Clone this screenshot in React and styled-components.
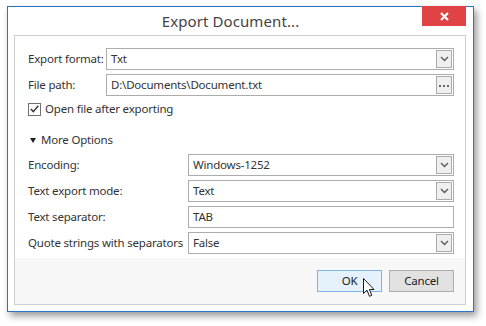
import React from 'react'
import styled, { createGlobalStyle } from 'styled-components'

const GlobalStyle = createGlobalStyle`
  html, body {
    margin: 0;
    padding: 0;
    background: #ffffff;
  }
  body {
    font-family: "Noto Sans", "Open Sans", sans-serif;
    color: #333333;
  }
`

const Page = styled.div`
  width: 486px;
  height: 326px;
  padding: 6px 0 0 7px;
  box-sizing: border-box;
`

const Window = styled.div`
  position: relative;
  width: 467px;
  height: 306px;
  box-sizing: border-box;
  border: 1px solid #2b74c5;
  background: #ffffff;
  box-shadow: 3px 4px 7px rgba(0, 0, 0, 0.4);
  display: flex;
  flex-direction: column;
`

const TitleBar = styled.div`
  height: 28px;
  flex-shrink: 0;
  display: flex;
  align-items: center;
  justify-content: center;
  padding-right: 20px;
`

const Title = styled.span`
  font-size: 15px;
  color: #444444;
  letter-spacing: 0.1px;
`

const CloseButton = styled.div`
  position: absolute;
  top: -1px;
  right: 7px;
  width: 44px;
  height: 20px;
  background: #e04343;
  display: flex;
  align-items: center;
  justify-content: center;
`

const Panel = styled.div`
  flex: 1;
  margin: 0 7px 6px 6px;
  border: 1px solid #cdcdcd;
  display: flex;
  flex-direction: column;
`

const Body = styled.div`
  padding: 12px 11px 4px 13px;
  background: #ffffff;
  display: flex;
  flex-direction: column;
`

const FormGrid = styled.div`
  display: grid;
  grid-template-columns: ${p => p.$label}px 1fr;
  row-gap: 4px;
  align-items: center;
`

const Text = `
  font-size: 11.5px;
  letter-spacing: -0.2px;
  line-height: 14px;
  color: #333333;
`

const Label = styled.span`
  ${Text}
  white-space: nowrap;
`

const Field = styled.div`
  ${Text}
  height: 22px;
  box-sizing: border-box;
  border: 1px solid #acacac;
  background: #ffffff;
  display: flex;
  align-items: center;
  padding-left: 4px;
`

const FieldText = styled.span`
  flex: 1;
`

const FieldButton = styled.div`
  width: 16px;
  height: 18px;
  margin-right: 1px;
  box-sizing: border-box;
  border: 1px solid #acacac;
  background: #efefef;
  display: flex;
  align-items: center;
  justify-content: center;
`

const CheckRow = styled.label`
  ${Text}
  height: 14px;
  display: flex;
  align-items: center;
  gap: 4px;
  margin-top: 6px;
`

const CheckBox = styled.span`
  width: 13px;
  height: 13px;
  box-sizing: border-box;
  border: 1px solid #707070;
  background: #ffffff;
  display: flex;
  align-items: center;
  justify-content: center;
`

const Expander = styled.div`
  ${Text}
  height: 14px;
  display: flex;
  align-items: center;
  gap: 5px;
  margin: 17px 0 7px 2px;
`

const Triangle = styled.span`
  width: 0;
  height: 0;
  border-left: 3px solid transparent;
  border-right: 3px solid transparent;
  border-top: 5px solid #1f1f1f;
`

const Footer = styled.div`
  flex: 1;
  background: #f7f7f7;
  display: flex;
  justify-content: flex-end;
  align-items: flex-start;
  gap: 7px;
  padding: 12px 11px 0 0;
`

const Button = styled.div`
  ${Text}
  position: relative;
  width: 65px;
  height: 22px;
  box-sizing: border-box;
  border: 1px solid ${p => (p.$hover ? '#7eb4ea' : '#adadad')};
  background: ${p => (p.$hover ? '#e5f1fb' : '#e1e1e1')};
  display: flex;
  align-items: center;
  justify-content: center;
  color: #222222;
`

const Cursor = styled.svg`
  position: absolute;
  left: 45px;
  top: 7px;
`

const Chevron = () => (
  <svg width="9" height="6" viewBox="0 0 9 6">
    <path d="M1 1 L4.5 4.5 L8 1" fill="none" stroke="#5a5a5a" strokeWidth="1.4" />
  </svg>
)

const Dots = () => (
  <svg width="10" height="3" viewBox="0 0 10 3">
    <rect x="0" y="1" width="2" height="2" fill="#6a6a6a" />
    <rect x="4" y="1" width="2" height="2" fill="#6a6a6a" />
    <rect x="8" y="1" width="2" height="2" fill="#6a6a6a" />
  </svg>
)

const Combo = ({ value }) => (
  <Field>
    <FieldText>{value}</FieldText>
    <FieldButton><Chevron /></FieldButton>
  </Field>
)

const options = [
  { label: 'Encoding:', value: 'Windows-1252', combo: true },
  { label: 'Text export mode:', value: 'Text', combo: true },
  { label: 'Text separator:', value: 'TAB', combo: false },
  { label: 'Quote strings with separators', value: 'False', combo: true },
]

const App = () => {
  return (
    <Page>
      <GlobalStyle />
      <Window>
        <TitleBar>
          <Title>Export Document...</Title>
        </TitleBar>
        <CloseButton>
          <svg width="9" height="9" viewBox="0 0 9 9">
            <path d="M1 1 L8 8 M8 1 L1 8" stroke="#ffffff" strokeWidth="2.2" />
          </svg>
        </CloseButton>
        <Panel>
          <Body>
            <FormGrid $label={78}>
              <Label>Export format:</Label>
              <Combo value="Txt" />
              <Label>File path:</Label>
              <Field>
                <FieldText>D:\Documents\Document.txt</FieldText>
                <FieldButton><Dots /></FieldButton>
              </Field>
            </FormGrid>
            <CheckRow>
              <CheckBox>
                <svg width="9" height="8" viewBox="0 0 9 8">
                  <path d="M0.8 4 L3.3 6.6 L8.3 0.8" fill="none" stroke="#333333" strokeWidth="1.4" />
                </svg>
              </CheckBox>
              Open file after exporting
            </CheckRow>
            <Expander>
              <Triangle />
              More Options
            </Expander>
            <FormGrid $label={160}>
              {options.map(o => (
                <React.Fragment key={o.label}>
                  <Label>{o.label}</Label>
                  {o.combo ? <Combo value={o.value} /> : <Field>{o.value}</Field>}
                </React.Fragment>
              ))}
            </FormGrid>
          </Body>
          <Footer>
            <Button $hover>
              OK
              <Cursor width="13" height="20" viewBox="0 0 13 20">
                <path
                  d="M0.5 0.5 L0.5 15.5 L4 12.2 L6.5 18.3 L8.8 17.3 L6.4 11.5 L11 11.5 Z"
                  fill="#ffffff"
                  stroke="#1a1a1a"
                  strokeWidth="1"
                  strokeLinejoin="round"
                />
              </Cursor>
            </Button>
            <Button>Cancel</Button>
          </Footer>
        </Panel>
      </Window>
    </Page>
  )
}

export default App
